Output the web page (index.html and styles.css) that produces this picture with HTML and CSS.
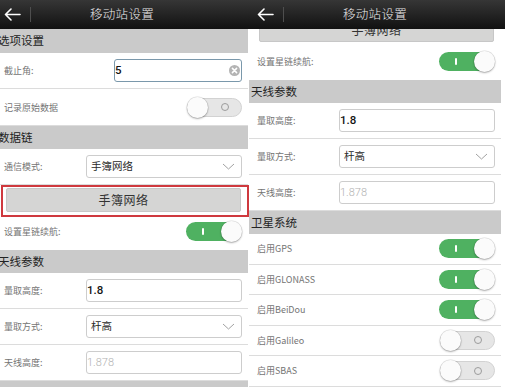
FILE: index.html
```html
<!DOCTYPE html>
<html lang="zh-CN">
<head>
<meta charset="utf-8">
<title>移动站设置</title>
<link rel="stylesheet" href="styles.css">
</head>
<body>
<div class="stage">
  <div class="frame frame-left">
    <div class="screen">
      <header class="topbar">
        <div class="back">
          <svg class="arrow" width="17" height="13" viewBox="0 0 17 13"><path d="M1.5 6.5H16M7 1L1.5 6.5L7 12" fill="none" stroke="#fff" stroke-width="1.6" stroke-linecap="round" stroke-linejoin="round"/></svg>
          <span class="sep"></span>
        </div>
        <div class="title">移动站设置</div>
        <div></div>
      </header>
      <div class="viewport">
        <div class="content">
          <div class="section first">选项设置</div>
          <div class="row">
            <span class="label">截止角:</span>
            <div class="field narrow focused">
              <span class="val">5</span>
              <svg class="clear" width="11" height="11" viewBox="0 0 11 11"><circle cx="5.5" cy="5.5" r="5.5" fill="#b4b4b4"/><path d="M3.4 3.4L7.6 7.6M7.6 3.4L3.4 7.6" stroke="#fff" stroke-width="1.5" stroke-linecap="round"/></svg>
            </div>
          </div>
          <div class="row tall">
            <span class="label">记录原始数据</span>
            <div class="toggle off"><span class="knob"></span><span class="ring"></span></div>
          </div>
          <div class="section">数据链</div>
          <div class="row">
            <span class="label">通信模式:</span>
            <div class="field select">
              <span class="opt">手簿网络</span>
              <svg class="chev" width="13" height="7" viewBox="0 0 13 7"><path d="M1 1L6.5 6L12 1" fill="none" stroke="#a2a2a2" stroke-width="1"/></svg>
            </div>
          </div>
          <div class="btn-wrap">
            <div class="btn">手簿网络</div>
            <div class="highlight"></div>
          </div>
          <div class="row after-btn">
            <span class="label">设置星链续航:</span>
            <div class="toggle on"><span class="mark"></span><span class="knob"></span></div>
          </div>
          <div class="section">天线参数</div>
          <div class="row">
            <span class="label">量取高度:</span>
            <div class="field"><span class="val">1.8</span></div>
          </div>
          <div class="row">
            <span class="label">量取方式:</span>
            <div class="field select">
              <span class="opt">杆高</span>
              <svg class="chev" width="13" height="7" viewBox="0 0 13 7"><path d="M1 1L6.5 6L12 1" fill="none" stroke="#a2a2a2" stroke-width="1"/></svg>
            </div>
          </div>
          <div class="row">
            <span class="label">天线高度:</span>
            <div class="field"><span class="val disabled">1.878</span></div>
          </div>
          <div class="section">卫星系统</div>
        </div>
      </div>
    </div>
  </div>

  <div class="frame frame-right">
    <div class="screen">
      <header class="topbar">
        <div class="back">
          <svg class="arrow" width="17" height="13" viewBox="0 0 17 13"><path d="M1.5 6.5H16M7 1L1.5 6.5L7 12" fill="none" stroke="#fff" stroke-width="1.6" stroke-linecap="round" stroke-linejoin="round"/></svg>
          <span class="sep"></span>
        </div>
        <div class="title">移动站设置</div>
        <div></div>
      </header>
      <div class="viewport">
        <div class="content scrolled">
          <div class="section first">选项设置</div>
          <div class="row">
            <span class="label">截止角:</span>
            <div class="field narrow"><span class="val">5</span></div>
          </div>
          <div class="row tall">
            <span class="label">记录原始数据</span>
            <div class="toggle off"><span class="knob"></span><span class="ring"></span></div>
          </div>
          <div class="section">数据链</div>
          <div class="row">
            <span class="label">通信模式:</span>
            <div class="field select">
              <span class="opt">手簿网络</span>
              <svg class="chev" width="13" height="7" viewBox="0 0 13 7"><path d="M1 1L6.5 6L12 1" fill="none" stroke="#a2a2a2" stroke-width="1"/></svg>
            </div>
          </div>
          <div class="btn-wrap">
            <div class="btn">手簿网络</div>
          </div>
          <div class="row after-btn">
            <span class="label">设置星链续航:</span>
            <div class="toggle on"><span class="mark"></span><span class="knob"></span></div>
          </div>
          <div class="section">天线参数</div>
          <div class="row">
            <span class="label">量取高度:</span>
            <div class="field"><span class="val">1.8</span></div>
          </div>
          <div class="row">
            <span class="label">量取方式:</span>
            <div class="field select">
              <span class="opt">杆高</span>
              <svg class="chev" width="13" height="7" viewBox="0 0 13 7"><path d="M1 1L6.5 6L12 1" fill="none" stroke="#a2a2a2" stroke-width="1"/></svg>
            </div>
          </div>
          <div class="row">
            <span class="label">天线高度:</span>
            <div class="field"><span class="val disabled">1.878</span></div>
          </div>
          <div class="section sat">卫星系统</div>
          <div class="row sat-row">
            <span class="label">启用GPS</span>
            <div class="toggle on"><span class="mark"></span><span class="knob"></span></div>
          </div>
          <div class="row sat-row">
            <span class="label">启用GLONASS</span>
            <div class="toggle on"><span class="mark"></span><span class="knob"></span></div>
          </div>
          <div class="row sat-row">
            <span class="label">启用BeiDou</span>
            <div class="toggle on"><span class="mark"></span><span class="knob"></span></div>
          </div>
          <div class="row sat-row">
            <span class="label">启用Galileo</span>
            <div class="toggle off"><span class="knob"></span><span class="ring"></span></div>
          </div>
          <div class="row sat-row">
            <span class="label">启用SBAS</span>
            <div class="toggle off"><span class="knob"></span><span class="ring"></span></div>
          </div>
        </div>
      </div>
    </div>
  </div>
</div>
</body>
</html>
```

FILE: styles.css
```css
* {
  box-sizing: border-box;
  margin: 0;
  padding: 0;
}

html, body {
  width: 505px;
  height: 387px;
  overflow: hidden;
  background: #ffffff;
}

body {
  font-family: "Noto Sans CJK SC", "Noto Sans", sans-serif;
  line-height: 1;
}

.stage {
  display: flex;
  height: 387px;
}

.frame {
  height: 387px;
  overflow: hidden;
  flex: none;
}

.frame-left {
  width: 249px;
}

.frame-right {
  width: 256px;
}

.screen {
  width: 256px;
  height: 387px;
  display: flex;
  flex-direction: column;
  background: #fff;
}

.frame-left .screen {
  margin-left: -4px;
}

/* top bar */
.topbar {
  flex: none;
  height: 29px;
  background: linear-gradient(#363636, #111111);
  display: grid;
  grid-template-columns: 40px 172px 40px 4px;
  align-items: center;
}

.back {
  display: flex;
  align-items: center;
  padding-left: 8px;
  height: 100%;
}

.arrow {
  display: block;
}

.sep {
  width: 1px;
  height: 15px;
  background: #4e4e4e;
  margin-left: 9px;
}

.title {
  text-align: center;
  color: #e9e9e9;
  font-size: 12.5px;
  font-weight: 300;
  letter-spacing: 0.3px;
}

/* scrolled body */
.viewport {
  flex: 1;
  overflow: hidden;
}

.content {
  width: 252px;
}

.content.scrolled {
  margin-top: -170px;
}

.section {
  height: 23px;
  background: #cacaca;
  color: #222;
  font-size: 11.5px;
  padding-left: 2px;
  display: flex;
  align-items: center;
}

.section.first {
  height: 24px;
}

.row {
  height: 36px;
  display: flex;
  align-items: center;
  padding: 0 6px 0 8px;
  border-bottom: 1px solid #dcdcdc;
}

.row.tall {
  height: 37px;
}

.row.after-btn {
  height: 38px;
  border-bottom: none;
}

.row.sat-row {
  height: 30.5px;
}

.label {
  flex: none;
  width: 82px;
  font-size: 9px;
  color: #747474;
  white-space: nowrap;
}

.field {
  flex: 1;
  height: 23px;
  border: 1px solid #cdcdcd;
  border-radius: 3px;
  background: #fff;
  display: flex;
  align-items: center;
  padding-left: 0;
}

.field.narrow {
  margin-left: 28px;
  justify-content: space-between;
  padding-right: 1px;
}

.field.focused {
  border: 1.5px solid #7a98ab;
}

.field.select {
  justify-content: space-between;
  padding-left: 4px;
  padding-right: 6px;
}

.val {
  font-family: "Roboto", "Noto Sans", sans-serif;
  font-size: 11.5px;
  font-weight: 500;
  color: #141414;
}

.val.disabled {
  font-weight: 300;
  color: #b2b2b2;
  font-size: 11px;
}

.opt {
  font-size: 10.5px;
  color: #2a2a2a;
}

.chev {
  display: block;
}

.clear {
  display: block;
}

/* button */
.btn-wrap {
  position: relative;
  padding-top: 3px;
}

.btn {
  margin: 0 7px 0 10px;
  height: 24px;
  background: #d5d5d4;
  border: 1px solid #c7c7c7;
  border-radius: 2px;
  font-size: 12px;
  color: #333;
  display: flex;
  align-items: center;
  justify-content: center;
  letter-spacing: 0.5px;
}

.highlight {
  position: absolute;
  left: 5px;
  right: -1px;
  top: 0;
  bottom: -5px;
  border: 2px solid #cf393e;
  pointer-events: none;
}

/* toggles */
.toggle {
  margin-left: auto;
  width: 55px;
  height: 19px;
  border-radius: 10px;
  display: flex;
  align-items: center;
  flex: none;
}

.toggle.on {
  background: #4fb161;
  justify-content: space-between;
  padding-left: 16px;
  margin-right: 1px;
}

.toggle.off {
  background: #e6e6e6;
  border: 1px solid #d2d2d2;
  justify-content: space-between;
  padding-right: 12px;
}

.knob {
  width: 21px;
  height: 21px;
  border-radius: 50%;
  background: #fbfbfb;
  box-shadow: 0 1px 2px rgba(0, 0, 0, 0.3), 0 0 0 0.5px rgba(0, 0, 0, 0.12);
  flex: none;
}

.toggle.on .knob {
  margin-right: -1px;
}

.toggle.off .knob {
  margin-left: -1px;
}

.mark {
  width: 1.5px;
  height: 7px;
  background: #ffffff;
  border-radius: 1px;
}

.ring {
  width: 8px;
  height: 8px;
  border-radius: 50%;
  border: 1px solid #9c9c9c;
}
```
